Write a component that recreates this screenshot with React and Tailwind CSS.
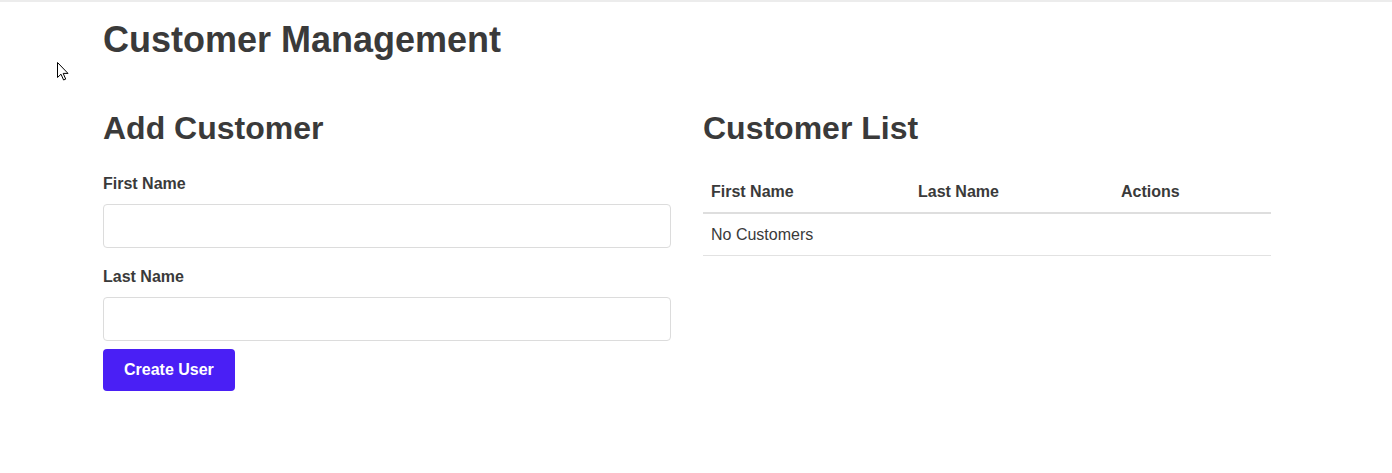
export default function App() {
  return (
    <div
      className="relative min-h-[473px] w-full border-t-2 border-[#ececec] bg-white text-[#3a3a3a]"
      style={{ fontFamily: '"Liberation Sans", Arial, sans-serif' }}
    >
      <svg
        className="absolute left-[57px] top-[60px]"
        width="12"
        height="19"
        viewBox="0 0 12 19"
      >
        <path
          d="M0.5 0.5 L0.5 15.5 L4 12.2 L6.6 18 L8.7 17.1 L6.2 11.4 L11 11.4 Z"
          fill="#fff"
          stroke="#000"
          strokeWidth="1"
          strokeLinejoin="miter"
        />
      </svg>

      <div className="ml-[103px] w-[1168px] pt-[16px]">
        <h1 className="text-[36px] font-bold leading-[43px]">Customer Management</h1>

        <div className="mt-[48px] grid grid-cols-2 gap-8">
          <div>
            <h2 className="text-[32px] font-bold leading-[38px]">Add Customer</h2>
            <div className="mt-[25px]">
              <label className="block text-base font-bold leading-6">First Name</label>
              <input
                type="text"
                className="mt-[8px] block h-[44px] w-full rounded-[4px] border border-[#dcdcdc] bg-white px-3 outline-none"
              />
              <label className="mt-[17px] block text-base font-bold leading-6">Last Name</label>
              <input
                type="text"
                className="mt-[8px] block h-[44px] w-full rounded-[4px] border border-[#dcdcdc] bg-white px-3 outline-none"
              />
              <button className="mt-[8px] h-[42px] rounded-[4px] bg-[#4a1ff5] px-[21px] text-base font-bold leading-6 text-white">
                Create User
              </button>
            </div>
          </div>

          <div>
            <h2 className="text-[32px] font-bold leading-[38px]">Customer List</h2>
            <table className="mt-[25px] w-full border-collapse text-left text-base leading-6">
              <thead>
                <tr className="border-b-2 border-[#dedede]">
                  <th className="w-[207px] px-2 pt-2 pb-[8px] font-bold">First Name</th>
                  <th className="w-[203px] px-2 pt-2 pb-[8px] font-bold">Last Name</th>
                  <th className="px-2 pt-2 pb-[8px] font-bold">Actions</th>
                </tr>
              </thead>
              <tbody>
                <tr className="border-b border-[#e2e2e2]">
                  <td className="px-2 pt-[9px] pb-[8px]">No Customers</td>
                  <td className="px-2 pt-[9px] pb-[8px]"></td>
                  <td className="px-2 pt-[9px] pb-[8px]"></td>
                </tr>
              </tbody>
            </table>
          </div>
        </div>
      </div>
    </div>
  );
}
